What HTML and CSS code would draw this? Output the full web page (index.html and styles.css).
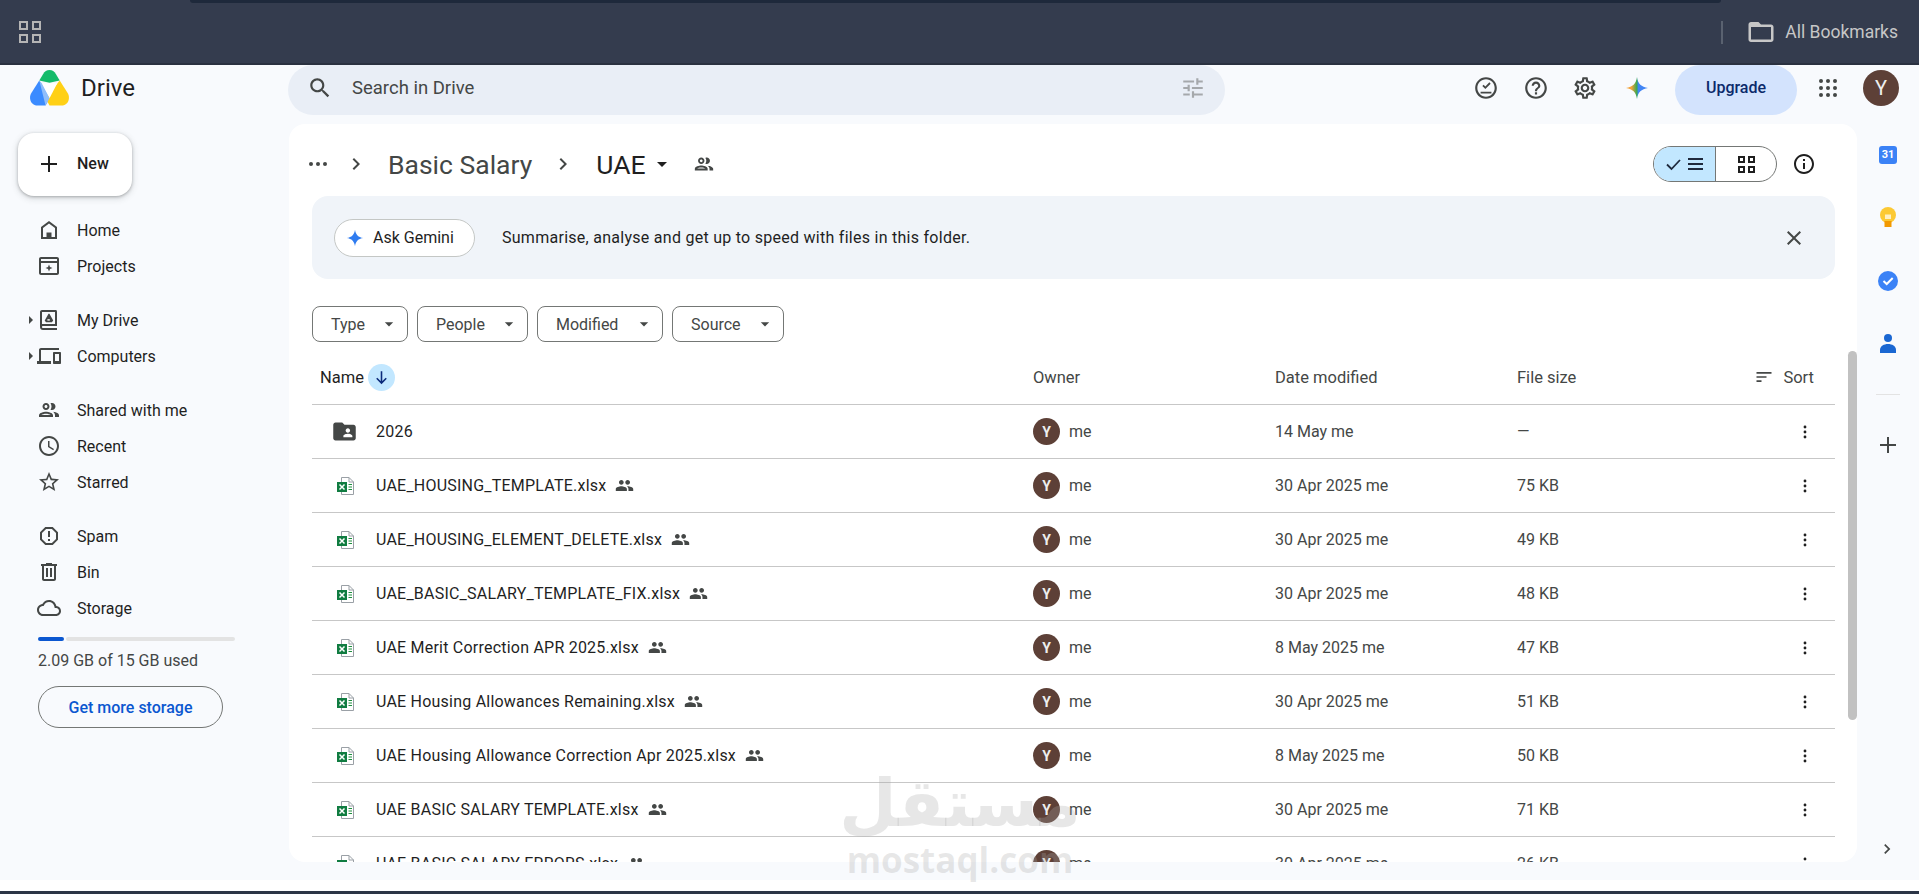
FILE: index.html
```html
<!DOCTYPE html>
<html lang="en">
<head>
    <meta charset="UTF-8">
    <meta name="viewport" content="width=device-width, initial-scale=1.0">
    <title>UAE - Google Drive</title>
    <link rel="stylesheet" href="styles.css">
</head>
<body>

<svg class="sprite" aria-hidden="true">
    <symbol id="i-search" viewBox="0 0 24 24"><path d="M15.5 14h-.79l-.28-.27C15.41 12.59 16 11.11 16 9.5 16 5.91 13.09 3 9.5 3S3 5.91 3 9.5 5.91 16 9.5 16c1.61 0 3.09-.59 4.23-1.57l.27.28v.79l5 4.99L20.49 19l-4.99-5zm-6 0C7.01 14 5 11.99 5 9.5S7.01 5 9.5 5 14 7.01 14 9.5 11.99 14 9.5 14z"/></symbol>
    <symbol id="i-tune" viewBox="0 0 24 24"><path d="M3 17v2h6v-2H3zM3 5v2h10V5H3zm10 16v-2h8v-2h-8v-2h-2v6h2zM7 9v2H3v2h4v2h2V9H7zm14 4v-2H11v2h10zm-6-4h2V7h4V5h-4V3h-2v6z"/></symbol>
    <symbol id="i-help" viewBox="0 0 24 24"><path d="M11 18h2v-2h-2v2zm1-16C6.48 2 2 6.48 2 12s4.48 10 10 10 10-4.48 10-10S17.52 2 12 2zm0 18c-4.41 0-8-3.59-8-8s3.59-8 8-8 8 3.59 8 8-3.59 8-8 8zm0-14c-2.21 0-4 1.79-4 4h2c0-1.1.9-2 2-2s2 .9 2 2c0 2-3 1.75-3 5h2c0-2.25 3-2.5 3-5 0-2.21-1.79-4-4-4z"/></symbol>
    <symbol id="i-gear" viewBox="0 0 24 24"><path d="M19.43 12.98c.04-.32.07-.64.07-.98 0-.34-.03-.66-.07-.98l2.11-1.65c.19-.15.24-.42.12-.64l-2-3.46c-.09-.16-.26-.25-.44-.25-.06 0-.12.01-.17.03l-2.49 1c-.52-.4-1.08-.73-1.69-.98l-.38-2.65C14.46 2.18 14.25 2 14 2h-4c-.25 0-.46.18-.49.42l-.38 2.65c-.61.25-1.17.59-1.69.98l-2.49-1c-.06-.02-.12-.03-.18-.03-.17 0-.34.09-.43.25l-2 3.46c-.13.22-.07.49.12.64l2.11 1.65c-.04.32-.07.65-.07.98 0 .33.03.66.07.98l-2.11 1.65c-.19.15-.24.42-.12.64l2 3.46c.09.16.26.25.44.25.06 0 .12-.01.17-.03l2.49-1c.52.4 1.08.73 1.69.98l.38 2.65c.03.24.24.42.49.42h4c.25 0 .46-.18.49-.42l.38-2.65c.61-.25 1.17-.59 1.69-.98l2.49 1c.06.02.12.03.18.03.17 0 .34-.09.43-.25l2-3.46c.12-.22.07-.49-.12-.64l-2.11-1.65zm-1.98-1.71c.04.31.05.52.05.73 0 .21-.02.43-.05.73l-.14 1.13.89.7 1.08.84-.7 1.21-1.27-.51-1.04-.42-.9.68c-.43.32-.84.56-1.25.73l-1.06.43-.16 1.13-.2 1.35h-1.4l-.19-1.35-.16-1.13-1.06-.43c-.43-.18-.83-.41-1.23-.71l-.91-.7-1.06.43-1.27.51-.7-1.21 1.08-.84.89-.7-.14-1.13c-.03-.31-.05-.54-.05-.74s.02-.43.05-.73l.14-1.13-.89-.7-1.08-.84.7-1.21 1.27.51 1.04.42.9-.68c.43-.32.84-.56 1.25-.73l1.06-.43.16-1.13.2-1.35h1.39l.19 1.35.16 1.13 1.06.43c.43.18.83.41 1.23.71l.91.7 1.06-.43 1.27-.51.7 1.21-1.07.85-.89.7.14 1.13zM12 8c-2.21 0-4 1.79-4 4s1.79 4 4 4 4-1.79 4-4-1.79-4-4-4zm0 6c-1.1 0-2-.9-2-2s.9-2 2-2 2 .9 2 2-.9 2-2 2z"/></symbol>
    <symbol id="i-offline" viewBox="0 0 24 24"><path d="M12 2C6.48 2 2 6.48 2 12s4.48 10 10 10 10-4.48 10-10S17.52 2 12 2zm0 18c-4.41 0-8-3.59-8-8s3.59-8 8-8 8 3.59 8 8-3.59 8-8 8z"/><path d="M7 15.5h10v1.6H7zM8.6 10.1l1.2-1.2 1.6 1.6 3.7-3.7 1.2 1.2-4.9 4.9z"/></symbol>
    <symbol id="i-plus" viewBox="0 0 24 24"><path d="M20 13h-7v7h-2v-7H4v-2h7V4h2v7h7v2z"/></symbol>
    <symbol id="i-home" viewBox="0 0 24 24"><path d="M12 3 4 9v12h16V9l-8-6zm6 16H6v-9l6-4.5 6 4.5v9z"/><path d="M9.500 14.500h5V20h-5z"/></symbol>
    <symbol id="i-projects" viewBox="0 0 24 24"><path d="M20 3H4c-1.100 0-2 .9-2 2v14c0 1.100.9 2 2 2h16c1.100 0 2-.9 2-2V5c0-1.100-.9-2-2-2zm0 16H4V9h16v10zM4 7V5h16v2H4z"/><path d="m12 10.500 1 2.500 2.500 1-2.500 1-1 2.500-1-2.500-2.500-1 2.500-1z"/></symbol>
    <symbol id="i-mydrive" viewBox="0 0 24 24"><path d="M19 2H5c-1.100 0-2 .9-2 2v15c0 1.700 1.300 3 3 3h14v-2H6c-.6 0-1-.4-1-1s.4-1 1-1h14V4c0-1.100-.4-2-1-2zm-1 14H5V4h13v12z"/><path d="m11.500 5.800-3.800 6.600 1.300 1.800h5.900l1.300-1.800-3.800-6.600z"/><path fill="#fff" d="M10.400 11.200h2.400v1.400h-2.400z"/></symbol>
    <symbol id="i-devices" viewBox="0 0 24 24"><path d="M4 6h18V4H4c-1.100 0-2 .9-2 2v11H0v3h14v-3H4V6zm19 2h-6c-.55 0-1 .45-1 1v10c0 .55.45 1 1 1h6c.55 0 1-.45 1-1V9c0-.55-.45-1-1-1zm-1 9h-4v-7h4v7z"/></symbol>
    <symbol id="i-people" viewBox="0 0 24 24"><path d="M9 13.750c-2.340 0-7 1.170-7 3.500V19h14v-1.750c0-2.330-4.660-3.500-7-3.500zM4.340 17c.84-.58 2.870-1.250 4.660-1.250s3.820.67 4.660 1.250H4.340zM9 12c1.930 0 3.500-1.570 3.500-3.500S10.930 5 9 5 5.500 6.570 5.500 8.500 7.070 12 9 12zm0-5c.83 0 1.500.67 1.500 1.500S9.830 10 9 10s-1.500-.67-1.500-1.500S8.170 7 9 7zm7.040 6.810c1.160.84 1.960 1.960 1.960 3.440V19h4v-1.750c0-2.020-3.500-3.170-5.960-3.440zM15 12c1.930 0 3.500-1.570 3.500-3.500S16.930 5 15 5c-.54 0-1.040.13-1.500.35.63.89 1 1.980 1 3.150s-.37 2.260-1 3.150c.46.22.96.35 1.500.35z"/></symbol>
    <symbol id="i-clock" viewBox="0 0 24 24"><path d="M11.990 2C6.470 2 2 6.480 2 12s4.470 10 9.990 10C17.520 22 22 17.520 22 12S17.520 2 11.990 2zM12 20c-4.420 0-8-3.580-8-8s3.580-8 8-8 8 3.580 8 8-3.580 8-8 8zm.5-13H11v6l5.250 3.150.75-1.230-4.500-2.670z"/></symbol>
    <symbol id="i-star" viewBox="0 0 24 24"><path d="M22 9.240l-7.190-.62L12 2 9.190 8.630 2 9.240l5.460 4.730L5.820 21 12 17.270 18.180 21l-1.630-7.030L22 9.240zM12 15.400l-3.760 2.270 1-4.280-3.320-2.880 4.380-.38L12 6.100l1.710 4.040 4.380.38-3.320 2.880 1 4.280L12 15.400z"/></symbol>
    <symbol id="i-spam" viewBox="0 0 24 24"><path d="M15.730 3H8.270L3 8.270v7.460L8.270 21h7.460L21 15.730V8.270L15.730 3zM19 14.900 14.900 19H9.100L5 14.900V9.100L9.100 5h5.800L19 9.100v5.800z"/><path d="M11 7h2v6h-2zM11 15h2v2h-2z"/></symbol>
    <symbol id="i-bin" viewBox="0 0 24 24"><path d="M15 4V3H9v1H4v2h1v13c0 1.100.9 2 2 2h10c1.100 0 2-.9 2-2V6h1V4h-5zm2 15H7V6h10v13zM9 8h2v9H9zm4 0h2v9h-2z"/></symbol>
    <symbol id="i-cloud" viewBox="0 0 24 24"><path d="M19.350 10.040C18.670 6.590 15.640 4 12 4 9.110 4 6.600 5.640 5.350 8.040 2.340 8.360 0 10.910 0 14c0 3.310 2.690 6 6 6h13c2.760 0 5-2.240 5-5 0-2.640-2.050-4.780-4.650-4.960zM19 18H6c-2.210 0-4-1.790-4-4 0-2.050 1.530-3.760 3.560-3.970l1.070-.11.5-.95C8.080 7.140 9.940 6 12 6c2.620 0 4.880 1.860 5.390 4.430l.3 1.500 1.530.11c1.560.1 2.780 1.410 2.780 2.960 0 1.650-1.350 3-3 3z"/></symbol>
    <symbol id="i-info" viewBox="0 0 24 24"><path d="M11 7h2v2h-2zm0 4h2v6h-2zm1-9C6.480 2 2 6.480 2 12s4.480 10 10 10 10-4.480 10-10S17.520 2 12 2zm0 18c-4.410 0-8-3.590-8-8s3.590-8 8-8 8 3.590 8 8-3.590 8-8 8z"/></symbol>
    <symbol id="i-close" viewBox="0 0 24 24"><path d="M19 6.410 17.590 5 12 10.590 6.410 5 5 6.410 10.590 12 5 17.590 6.410 19 12 13.410 17.590 19 19 17.590 13.410 12z"/></symbol>
    <symbol id="i-sort" viewBox="0 0 24 24"><path d="M3 18h6v-2H3v2zM3 6v2h18V6H3zm0 7h12v-2H3v2z"/></symbol>
    <symbol id="i-chev" viewBox="0 0 24 24"><path d="M10 6 8.590 7.410 13.170 12l-4.580 4.590L10 18l6-6z"/></symbol>
    <symbol id="i-caret" viewBox="0 0 24 24"><path d="m7 10 5 5 5-5z"/></symbol>
    <symbol id="i-dots" viewBox="0 0 24 24"><circle cx="12" cy="6" r="1.700"/><circle cx="12" cy="12" r="1.700"/><circle cx="12" cy="18" r="1.700"/></symbol>
    <symbol id="i-shared" viewBox="0 0 24 24"><path d="M16 11c1.660 0 2.990-1.340 2.990-3S17.660 5 16 5c-1.660 0-3 1.340-3 3s1.340 3 3 3zm-8 0c1.660 0 2.990-1.340 2.990-3S9.660 5 8 5C6.340 5 5 6.340 5 8s1.340 3 3 3zm0 2c-2.330 0-7 1.170-7 3.500V19h14v-2.500c0-2.330-4.670-3.500-7-3.500zm8 0c-.29 0-.62.02-.97.05 1.160.84 1.970 1.970 1.970 3.450V19h6v-2.500c0-2.330-4.670-3.500-7-3.500z"/></symbol>
    <symbol id="i-folder-shared" viewBox="0 0 24 24"><path d="M20 6h-8l-2-2H4c-1.100 0-1.990.9-1.990 2L2 18c0 1.100.9 2 2 2h16c1.100 0 2-.9 2-2V8c0-1.100-.9-2-2-2zm-5 3c1.100 0 2 .9 2 2s-.9 2-2 2-2-.9-2-2 .9-2 2-2zm4 8h-8v-1c0-1.330 2.670-2 4-2s4 .67 4 2v1z"/></symbol>
    <symbol id="i-xlsx" viewBox="0 0 20 20">
        <path d="M5.500 1.500H13L17.500 6v12.500h-12z" fill="#fff" stroke="#9aa0a6" stroke-width="1"/>
        <path d="M13 1.500V6h4.500" fill="none" stroke="#9aa0a6" stroke-width="1"/>
        <path d="M12.500 8.500h3.500M12.500 11h3.500M12.500 13.500h3.500" stroke="#1e8e3e" stroke-width="1"/>
        <rect x="1" y="6" width="10" height="10" fill="#107c41"/>
        <path d="m3.500 8.500 5 5M8.500 8.500l-5 5" stroke="#fff" stroke-width="1.500"/>
    </symbol>
</svg>

<div class="browser-bar">
    <span class="tab-edge"></span>
    <div class="bar-apps"><i></i><i></i><i></i><i></i></div>
    <div class="bookmarks">
        <span class="bar-sep"></span>
        <svg class="bm-folder" viewBox="0 0 24 24"><path d="M20 6h-8l-2-2H4c-1.100 0-2 .9-2 2v12c0 1.100.9 2 2 2h16c1.100 0 2-.9 2-2V8c0-1.100-.9-2-2-2zm0 12H4V8h16v10z"/></svg>
        <span>All Bookmarks</span>
    </div>
</div>

<div class="app">
    <aside class="sidebar">
        <div class="logo">
            <svg class="logo-mark" viewBox="0 0 40 37">
                <path d="M20 0c3 0 5 1.600 6.500 4l4 6.800L20 13 9.500 10.800l4-6.800C15 1.600 17 0 20 0z" fill="#14bb6a"/>
                <path d="M9.500 10.800 20 29l-4 7.500H8c-5 0-8-3.500-8-8 0-2 .6-3.500 1.500-5z" fill="#3b8bff"/>
                <path d="M30.500 10.800 38.500 23.500c.9 1.500 1.500 3 1.500 5 0 4.500-3 8-8 8H20l-4-7.500z" fill="#ffd016"/>
                <path d="M12 13.500h16L20 29z" fill="#fff"/>
                <path d="M9.500 10.800 12 13.500l8 15.500-4 7.500z" fill="#8fbdfb"/>
            </svg>
            <span>Drive</span>
        </div>
        <button class="new-btn"><svg class="ico ico-plus"><use href="#i-plus"/></svg><span>New</span></button>
        <nav class="nav">
            <div class="nav-group">
                <a class="nav-item"><svg class="ico"><use href="#i-home"/></svg>Home</a>
                <a class="nav-item"><svg class="ico"><use href="#i-projects"/></svg>Projects</a>
            </div>
            <div class="nav-group">
                <a class="nav-item"><b class="tri"></b><svg class="ico"><use href="#i-mydrive"/></svg>My Drive</a>
                <a class="nav-item"><b class="tri"></b><svg class="ico"><use href="#i-devices"/></svg>Computers</a>
            </div>
            <div class="nav-group">
                <a class="nav-item"><svg class="ico"><use href="#i-people"/></svg>Shared with me</a>
                <a class="nav-item"><svg class="ico"><use href="#i-clock"/></svg>Recent</a>
                <a class="nav-item"><svg class="ico"><use href="#i-star"/></svg>Starred</a>
            </div>
            <div class="nav-group">
                <a class="nav-item"><svg class="ico"><use href="#i-spam"/></svg>Spam</a>
                <a class="nav-item"><svg class="ico"><use href="#i-bin"/></svg>Bin</a>
                <a class="nav-item"><svg class="ico"><use href="#i-cloud"/></svg>Storage</a>
            </div>
        </nav>
        <div class="storage">
            <div class="storage-bar"><span></span><span></span></div>
            <p>2.09 GB of 15 GB used</p>
            <button class="storage-btn">Get more storage</button>
        </div>
    </aside>

    <div class="center">
        <header class="topbar">
            <div class="search">
                <svg class="ico"><use href="#i-search"/></svg>
                <span>Search in Drive</span>
                <svg class="ico ico-tune"><use href="#i-tune"/></svg>
            </div>
            <div class="top-actions">
                <svg class="ico top-ico"><use href="#i-offline"/></svg>
                <svg class="ico top-ico"><use href="#i-help"/></svg>
                <svg class="ico top-ico"><use href="#i-gear"/></svg>
                <svg class="ico gem-ico" viewBox="0 0 24 24">
                    <defs><linearGradient id="gem" x1="0" y1="0" x2="1" y2="0"><stop offset="0.25" stop-color="#f2a33a"/><stop offset="0.5" stop-color="#34a853"/><stop offset="0.55" stop-color="#4285f4"/></linearGradient></defs>
                    <path d="M12 1c.9 6.600 4.400 10.100 11 11-6.600.9-10.100 4.400-11 11-.9-6.600-4.400-10.100-11-11 6.600-.9 10.100-4.400 11-11z" fill="url(#gem)"/>
                </svg>
                <button class="upgrade">Upgrade</button>
                <svg class="apps-dots" viewBox="0 0 18 18"><g fill="#444746"><circle cx="2" cy="2" r="2"/><circle cx="9" cy="2" r="2"/><circle cx="16" cy="2" r="2"/><circle cx="2" cy="9" r="2"/><circle cx="9" cy="9" r="2"/><circle cx="16" cy="9" r="2"/><circle cx="2" cy="16" r="2"/><circle cx="9" cy="16" r="2"/><circle cx="16" cy="16" r="2"/></g></svg>
                <span class="avatar avatar-lg">Y</span>
            </div>
        </header>

        <main class="panel">
            <div class="crumbs">
                <span class="crumb-dots"><i></i><i></i><i></i></span>
                <svg class="ico crumb-chev"><use href="#i-chev"/></svg>
                <span class="crumb">Basic Salary</span>
                <svg class="ico crumb-chev crumb-chev-2"><use href="#i-chev"/></svg>
                <span class="crumb crumb-on">UAE</span>
                <svg class="ico crumb-caret"><use href="#i-caret"/></svg>
                <svg class="ico crumb-people"><use href="#i-people"/></svg>
                <div class="view-toggle">
                    <span class="view-list">
                        <svg viewBox="0 0 37 14" class="view-svg"><path d="M1 7.500 5.500 12 14 3" fill="none" stroke="#1f2a3d" stroke-width="1.800"/><path d="M22 2h15M22 7h15M22 12h15" stroke="#1f2a3d" stroke-width="2"/></svg>
                    </span>
                    <span class="view-grid"><i></i><i></i><i></i><i></i></span>
                </div>
                <svg class="ico info-ico"><use href="#i-info"/></svg>
            </div>

            <div class="gemini">
                <button class="ask">
                    <svg class="ask-star" viewBox="0 0 24 24"><path d="M12 1c.9 6.600 4.400 10.100 11 11-6.600.9-10.100 4.400-11 11-.9-6.600-4.400-10.100-11-11 6.600-.9 10.100-4.400 11-11z" fill="#2f7cf0"/></svg>
                    Ask Gemini
                </button>
                <span class="gem-text">Summarise, analyse and get up to speed with files in this folder.</span>
                <svg class="ico gem-close"><use href="#i-close"/></svg>
            </div>

            <div class="filters">
                <button class="chip chip-type">Type<svg class="ico"><use href="#i-caret"/></svg></button>
                <button class="chip chip-people">People<svg class="ico"><use href="#i-caret"/></svg></button>
                <button class="chip chip-mod">Modified<svg class="ico"><use href="#i-caret"/></svg></button>
                <button class="chip chip-src">Source<svg class="ico"><use href="#i-caret"/></svg></button>
            </div>

            <div class="row head">
                <div class="col-name head-name">Name <span class="sort-arrow"><svg viewBox="0 0 24 24"><path d="M12 4v15M6 13l6 6 6-6" fill="none" stroke="#0b2a7a" stroke-width="2"/></svg></span></div>
                <div>Owner</div>
                <div>Date modified</div>
                <div>File size</div>
                <div class="head-sort"><svg class="ico"><use href="#i-sort"/></svg>Sort</div>
            </div>

            <div class="row">
                <div class="col-name"><svg class="file-ico folder-ico"><use href="#i-folder-shared"/></svg><span class="fname">2026</span></div>
                <div class="owner"><span class="avatar">Y</span>me</div>
                <div>14 May me</div>
                <div>—</div>
                <div class="row-menu"><svg class="ico"><use href="#i-dots"/></svg></div>
            </div>
            <div class="row">
                <div class="col-name"><svg class="file-ico"><use href="#i-xlsx"/></svg><span class="fname">UAE_HOUSING_TEMPLATE.xlsx</span><svg class="ico shared"><use href="#i-shared"/></svg></div>
                <div class="owner"><span class="avatar">Y</span>me</div>
                <div>30 Apr 2025 me</div>
                <div>75 KB</div>
                <div class="row-menu"><svg class="ico"><use href="#i-dots"/></svg></div>
            </div>
            <div class="row">
                <div class="col-name"><svg class="file-ico"><use href="#i-xlsx"/></svg><span class="fname">UAE_HOUSING_ELEMENT_DELETE.xlsx</span><svg class="ico shared"><use href="#i-shared"/></svg></div>
                <div class="owner"><span class="avatar">Y</span>me</div>
                <div>30 Apr 2025 me</div>
                <div>49 KB</div>
                <div class="row-menu"><svg class="ico"><use href="#i-dots"/></svg></div>
            </div>
            <div class="row">
                <div class="col-name"><svg class="file-ico"><use href="#i-xlsx"/></svg><span class="fname">UAE_BASIC_SALARY_TEMPLATE_FIX.xlsx</span><svg class="ico shared"><use href="#i-shared"/></svg></div>
                <div class="owner"><span class="avatar">Y</span>me</div>
                <div>30 Apr 2025 me</div>
                <div>48 KB</div>
                <div class="row-menu"><svg class="ico"><use href="#i-dots"/></svg></div>
            </div>
            <div class="row">
                <div class="col-name"><svg class="file-ico"><use href="#i-xlsx"/></svg><span class="fname">UAE Merit Correction APR 2025.xlsx</span><svg class="ico shared"><use href="#i-shared"/></svg></div>
                <div class="owner"><span class="avatar">Y</span>me</div>
                <div>8 May 2025 me</div>
                <div>47 KB</div>
                <div class="row-menu"><svg class="ico"><use href="#i-dots"/></svg></div>
            </div>
            <div class="row">
                <div class="col-name"><svg class="file-ico"><use href="#i-xlsx"/></svg><span class="fname">UAE Housing Allowances Remaining.xlsx</span><svg class="ico shared"><use href="#i-shared"/></svg></div>
                <div class="owner"><span class="avatar">Y</span>me</div>
                <div>30 Apr 2025 me</div>
                <div>51 KB</div>
                <div class="row-menu"><svg class="ico"><use href="#i-dots"/></svg></div>
            </div>
            <div class="row">
                <div class="col-name"><svg class="file-ico"><use href="#i-xlsx"/></svg><span class="fname">UAE Housing Allowance Correction Apr 2025.xlsx</span><svg class="ico shared"><use href="#i-shared"/></svg></div>
                <div class="owner"><span class="avatar">Y</span>me</div>
                <div>8 May 2025 me</div>
                <div>50 KB</div>
                <div class="row-menu"><svg class="ico"><use href="#i-dots"/></svg></div>
            </div>
            <div class="row">
                <div class="col-name"><svg class="file-ico"><use href="#i-xlsx"/></svg><span class="fname">UAE BASIC SALARY TEMPLATE.xlsx</span><svg class="ico shared"><use href="#i-shared"/></svg></div>
                <div class="owner"><span class="avatar">Y</span>me</div>
                <div>30 Apr 2025 me</div>
                <div>71 KB</div>
                <div class="row-menu"><svg class="ico"><use href="#i-dots"/></svg></div>
            </div>
            <div class="row">
                <div class="col-name"><svg class="file-ico"><use href="#i-xlsx"/></svg><span class="fname">UAE BASIC SALARY ERRORS.xlsx</span><svg class="ico shared"><use href="#i-shared"/></svg></div>
                <div class="owner"><span class="avatar">Y</span>me</div>
                <div>30 Apr 2025 me</div>
                <div>26 KB</div>
                <div class="row-menu"><svg class="ico"><use href="#i-dots"/></svg></div>
            </div>
            <span class="scroll-thumb"></span>
        </main>
    </div>

    <aside class="rail">
        <span class="rail-cal">31</span>
        <svg class="rail-ico" viewBox="0 0 24 24"><circle cx="12" cy="9" r="8" fill="#fcc934"/><path d="M8.500 15h7v6h-7z" fill="#f29900"/><path d="M9 8.500h6V13H9z" fill="#feefc3"/></svg>
        <svg class="rail-ico" viewBox="0 0 24 24"><circle cx="12" cy="12" r="10" fill="#3b82f6"/><path d="m7.500 12 3.200 3 6-6" fill="none" stroke="#fff" stroke-width="2"/></svg>
        <svg class="rail-ico" viewBox="0 0 24 24"><circle cx="12" cy="6" r="4" fill="#1a67d2"/><path d="M4 21v-3c0-4 4-6 8-6s8 2 8 6v3z" fill="#1a67d2"/></svg>
        <span class="rail-sep"></span>
        <svg class="ico rail-plus"><use href="#i-plus"/></svg>
        <svg class="ico rail-chev"><use href="#i-chev"/></svg>
    </aside>
</div>

<div class="bottom-strip"></div>
<div class="bottom-bar"></div>

<div class="watermark">
    <span class="wm-ar" lang="ar" dir="rtl">مستقل</span>
    <span class="wm-en">mostaql.com</span>
</div>

</body>
</html>
```

FILE: styles.css
```css
* {
    box-sizing: border-box;
}
html, body {
    margin: 0;
    height: 894px;
    overflow: hidden;
}
body {
    font-family: Roboto, "Liberation Sans", sans-serif;
    font-size: 16px;
    color: #1f1f1f;
    background-color: #f8fafd;
    display: flex;
    flex-direction: column;
    position: relative;
}
button {
    font-family: inherit;
    cursor: pointer;
}
.sprite {
    display: none;
}
.ico {
    width: 24px;
    height: 24px;
    fill: #444746;
    flex: none;
    display: block;
}

/* browser bookmarks bar */
.browser-bar {
    height: 65px;
    flex: none;
    background-color: #343c4e;
    border-bottom: 2px solid #2a3140;
    display: flex;
    align-items: center;
    justify-content: space-between;
    padding: 3px 21px 2px 19px;
    position: relative;
}
.tab-edge {
    position: absolute;
    left: 190px;
    right: 198px;
    top: 0;
    height: 3px;
    background-color: #1e293b;
    border-radius: 0 0 8px 8px;
}
.bar-apps {
    display: grid;
    grid-template-columns: 9px 9px;
    gap: 4px;
}
.bar-apps i {
    width: 9px;
    height: 9px;
    border: 2px solid #b5b5b5;
}
.bookmarks {
    display: flex;
    align-items: center;
    color: #c7c7c7;
    font-size: 17.5px;
}
.bar-sep {
    width: 2px;
    height: 23px;
    background-color: #5a6270;
    margin-right: 23px;
}
.bm-folder {
    width: 30px;
    height: 30px;
    fill: #c7c7c7;
    margin-right: 9px;
}

/* main layout */
.app {
    height: 815px;
    flex: none;
    display: flex;
}
.sidebar {
    width: 289px;
    flex: none;
}
.center {
    width: 1568px;
    flex: none;
    display: flex;
    flex-direction: column;
}
.rail {
    flex: 1;
    display: flex;
    flex-direction: column;
    align-items: center;
    padding-top: 78px;
    position: relative;
}

/* sidebar */
.logo {
    height: 46px;
    display: flex;
    align-items: center;
    padding: 0 0 1px 30px;
    font-size: 24px;
    color: #1f1f1f;
}
.logo-mark {
    width: 39px;
    height: 36px;
    margin-right: 12px;
}
.new-btn {
    width: 114px;
    height: 63px;
    margin: 22px 0 0 18px;
    border: 0;
    border-radius: 16px;
    background-color: #fff;
    box-shadow: 0 1px 3px rgba(60,64,67,.35), 0 2px 6px 1px rgba(60,64,67,.15);
    display: flex;
    align-items: center;
    padding: 0 0 2px 19px;
    font-size: 16px;
    font-weight: 500;
    color: #1f1f1f;
}
.ico-plus {
    margin-right: 16px;
    fill: #1f1f1f;
}
.nav {
    margin-top: 16px;
}
.nav-group {
    margin-bottom: 18px;
}
.nav-item {
    height: 36px;
    display: flex;
    align-items: center;
    padding-left: 37px;
    color: #1f1f1f;
    position: relative;
}
.nav-item .ico {
    margin-right: 16px;
}
.tri {
    position: absolute;
    left: 29px;
    top: 14px;
    border-left: 4px solid #444746;
    border-top: 4px solid transparent;
    border-bottom: 4px solid transparent;
}
.storage {
    margin-top: -7px;
    padding-left: 38px;
}
.storage-bar {
    width: 197px;
    height: 4px;
    display: flex;
    gap: 2px;
}
.storage-bar span:first-child {
    width: 26px;
    background-color: #0b57d0;
    border-radius: 2px;
}
.storage-bar span:last-child {
    flex: 1;
    background-color: #e3e3e3;
    border-radius: 2px;
}
.storage p {
    margin: 10px 0 0;
    height: 20px;
    line-height: 20px;
    color: #444746;
}
.storage-btn {
    margin-top: 15px;
    width: 185px;
    height: 42px;
    background: transparent;
    border: 1px solid #747775;
    border-radius: 21px;
    color: #0b57d0;
    font-size: 16px;
    font-weight: 500;
}

.topbar {
    height: 50px;
    flex: none;
    margin-bottom: 9px;
    display: flex;
    align-items: flex-start;
}
.search {
    width: 937px;
    height: 50px;
    flex: none;
    margin-left: -1px;
    background-color: #e9eef6;
    border-radius: 25px;
    display: flex;
    align-items: center;
    padding: 0 19px 5px 19px;
    font-size: 18.5px;
    color: #444746;
}
.search .ico {
    width: 26px;
    height: 26px;
}
.search span {
    flex: 1;
    margin-left: 19px;
}
.search .ico-tune {
    fill: #a5a8ab;
}
.top-actions {
    flex: none;
    height: 45px;
    display: flex;
    align-items: center;
    padding-left: 248px;
}
.top-ico {
    width: 26px;
    height: 26px;
    margin-right: 23.5px;
}
.gem-ico {
    margin: 0 26px 0 3.5px;
}
.upgrade {
    width: 122px;
    height: 50px;
    align-self: flex-start;
    border: 0;
    border-radius: 25px;
    padding: 0 0 5px;
    background-color: #d3e3fd;
    color: #0b2a6b;
    font-size: 16px;
    font-weight: 500;
    flex: none;
}
.apps-dots {
    width: 18px;
    height: 18px;
    margin: 0 0 0 22px;
    flex: none;
}
.avatar {
    width: 27px;
    height: 27px;
    border-radius: 50%;
    background-color: #5d4037;
    color: #eee;
    font-size: 14px;
    font-weight: 700;
    display: inline-flex;
    align-items: center;
    justify-content: center;
    flex: none;
}
.avatar-lg {
    width: 36px;
    height: 36px;
    margin-left: 26px;
    font-size: 20px;
    font-weight: 400;
}

/* white panel */
.panel {
    height: 738px;
    flex: none;
    background-color: #fff;
    border-radius: 16px;
    overflow: hidden;
    padding: 0 22px 0 23px;
    position: relative;
}
.crumbs {
    height: 72px;
    display: flex;
    align-items: center;
    padding-top: 8px;
    color: #444746;
}
.crumb-dots {
    display: flex;
    gap: 3px;
    margin-left: -3px;
}
.crumb-dots i {
    width: 4px;
    height: 4px;
    border-radius: 50%;
    background-color: #444746;
}
.crumb-chev {
    margin-left: 17px;
}
.crumb {
    font-size: 26.5px;
    margin-left: 20px;
}
.crumb-chev-2 {
    margin-left: 19px;
}
.crumb-on {
    color: #1f1f1f;
    margin-left: 21px;
}
.crumb-caret {
    fill: #1f1f1f;
    margin-left: 4px;
}
.crumb-people {
    margin-left: 19px;
    width: 22px;
    height: 22px;
}
.view-toggle {
    margin-left: auto;
    width: 124px;
    height: 36px;
    border: 1px solid #747775;
    border-radius: 18px;
    display: flex;
    overflow: hidden;
}
.view-list {
    width: 62px;
    background-color: #c2e7ff;
    border-right: 1px solid #747775;
    display: flex;
    align-items: center;
    justify-content: center;
}
.view-svg {
    width: 37px;
    height: 14px;
}
.view-grid {
    flex: 1;
    display: grid;
    grid-template-columns: 7px 7px;
    grid-auto-rows: 7px;
    gap: 3px;
    align-content: center;
    justify-content: center;
}
.view-grid i {
    border: 2px solid #1f1f1f;
}
.info-ico {
    margin: 0 19px 0 15px;
    fill: #1f1f1f;
}
.gemini {
    height: 83px;
    background-color: #f0f4f9;
    border-radius: 16px;
    display: flex;
    align-items: center;
    padding: 0 29px 0 22px;
}
.ask {
    height: 38px;
    width: 141px;
    flex: none;
    background-color: #fff;
    border: 1px solid #c4c7c5;
    border-radius: 19px;
    display: flex;
    align-items: center;
    padding: 0 0 0 11px;
    font-size: 16px;
    color: #1f1f1f;
}
.ask-star {
    width: 18px;
    height: 18px;
    margin-right: 9px;
}
.gem-text {
    flex: 1;
    margin-left: 27px;
    color: #1f1f1f;
    letter-spacing: 0.27px;
}
.filters {
    display: flex;
    gap: 9px;
    margin-top: 27px;
}
.chip {
    height: 36px;
    background: #fff;
    border: 1px solid #747775;
    border-radius: 8px;
    display: flex;
    align-items: center;
    justify-content: space-between;
    padding: 0 8px 0 18px;
    font-size: 16px;
    color: #444746;
}
.chip .ico {
    width: 20px;
    height: 20px;
}
.chip-type {
    width: 96px;
}
.chip-people {
    width: 111px;
}
.chip-mod {
    width: 126px;
}
.chip-src {
    width: 112px;
}

/* file table */
.row {
    height: 54px;
    display: grid;
    grid-template-columns: 721px 242px 242px 1fr 120px;
    align-items: center;
    border-bottom: 1px solid #c7c7c7;
    color: #444746;
}
.head {
    height: 63px;
    padding-top: 8px;
    font-size: 16.5px;
}
.col-name {
    display: flex;
    align-items: center;
    color: #1f1f1f;
    padding-left: 24px;
}
.head-name {
    padding-left: 8px;
    color: #1f1f1f;
}
.sort-arrow {
    width: 27px;
    height: 27px;
    border-radius: 50%;
    background-color: #c2e7ff;
    margin-left: 4px;
    display: flex;
    align-items: center;
    justify-content: center;
}
.sort-arrow svg {
    width: 19px;
    height: 19px;
}
.head-sort {
    display: flex;
    align-items: center;
    justify-content: flex-end;
    padding-right: 21px;
}
.head-sort .ico {
    width: 20px;
    height: 20px;
    margin-right: 9px;
}
.file-ico {
    width: 20px;
    height: 20px;
    flex: none;
}
.folder-ico {
    width: 27px;
    height: 27px;
    margin: 0 -2px 0 -5px;
    fill: #444746;
}
.fname {
    margin-left: 20px;
    letter-spacing: 0.22px;
}
.shared {
    width: 19px;
    height: 19px;
    margin-left: 9px;
}
.owner {
    display: flex;
    align-items: center;
}
.owner .avatar {
    margin-right: 9px;
}
.row-menu {
    display: flex;
    justify-content: flex-end;
    padding-right: 20px;
}
.row-menu .ico {
    width: 20px;
    height: 20px;
    fill: #1f1f1f;
}
.scroll-thumb {
    position: absolute;
    right: 0;
    top: 227px;
    width: 9px;
    height: 369px;
    background-color: #c1c1c1;
    border-radius: 5px;
}

/* right rail */
.rail-cal {
    width: 18px;
    height: 18px;
    flex: none;
    border-radius: 3px;
    background-color: #3b82f6;
    color: #fff;
    font-size: 11px;
    font-weight: 700;
    text-align: center;
    line-height: 18px;
    margin-top: 3px;
    margin-bottom: 42px;
}
.rail-ico {
    width: 24px;
    height: 24px;
    flex: none;
    margin-bottom: 39px;
}
.rail-sep {
    width: 24px;
    height: 1px;
    flex: none;
    background-color: #e3e3e3;
    margin-top: -1px;
}
.rail-plus {
    margin-top: 38px;
}
.rail-chev {
    position: absolute;
    bottom: 21px;
    left: 20px;
    width: 20px;
    height: 20px;
}

/* bottom of the window */
.bottom-strip {
    height: 11px;
    flex: none;
    background-color: #fff;
}
.bottom-bar {
    flex: 1;
    background-color: #2c3546;
}
.watermark {
    position: absolute;
    left: 844px;
    top: 768px;
    width: 232px;
    display: flex;
    flex-direction: column;
    align-items: center;
    color: rgba(170,170,170,.28);
    pointer-events: none;
}
.wm-ar {
    font-family: "DejaVu Sans", sans-serif;
    font-weight: 700;
    font-size: 66px;
    line-height: 72px;
}
.wm-en {
    font-family: "Open Sans", sans-serif;
    font-weight: 700;
    font-size: 35px;
    line-height: 40px;
}
```
